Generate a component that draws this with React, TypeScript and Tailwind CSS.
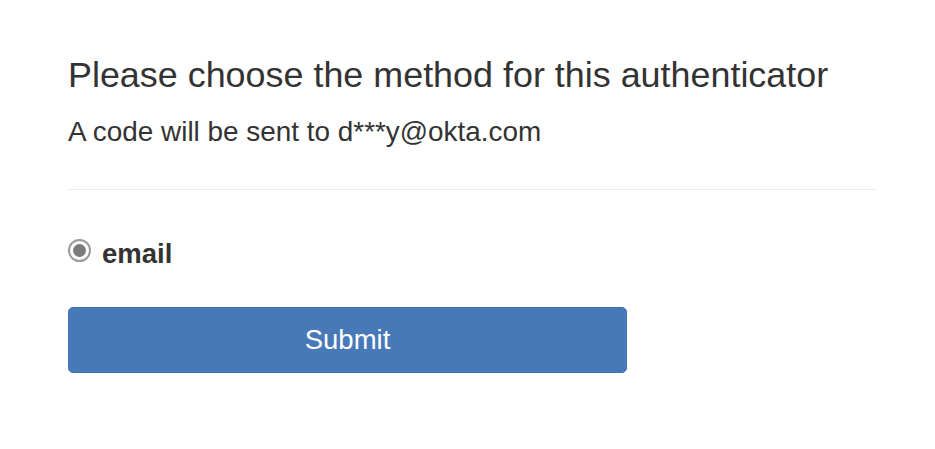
export default function App() {
  return (
    <div className="min-h-[449px] w-[935px] bg-white font-['Liberation_Sans',Arial,sans-serif] text-[#333333]">
      <div className="pl-[68px] pr-[58px] pt-[55px]">
        {/* Heading */}
        <h2 className="text-[35.9px] leading-[40px] font-normal">
          Please choose the method for this authenticator
        </h2>
        <p className="mt-[21px] text-[27.9px] leading-[32px]">
          A code will be sent to d***y@okta.com
        </p>

        <div className="mt-[41px] h-px bg-[#ebebeb]" />

        {/* Method choice */}
        <label className="mt-[49px] flex items-center gap-[11px]">
          <span className="flex h-[23px] w-[23px] -translate-y-[4px] items-center justify-center rounded-full border-2 border-[#999999] bg-white">
            <span className="h-[13px] w-[13px] rounded-full bg-[#7a7a7a]" />
          </span>
          <span className="text-[27.5px] leading-[30px] font-bold">email</span>
        </label>

        <button className="mt-[38px] flex h-[66px] w-[559px] items-center justify-center rounded-[5px] border border-[#4272b0] bg-[#4778b8] text-[27.5px] text-white">
          Submit
        </button>
      </div>
    </div>
  );
}
